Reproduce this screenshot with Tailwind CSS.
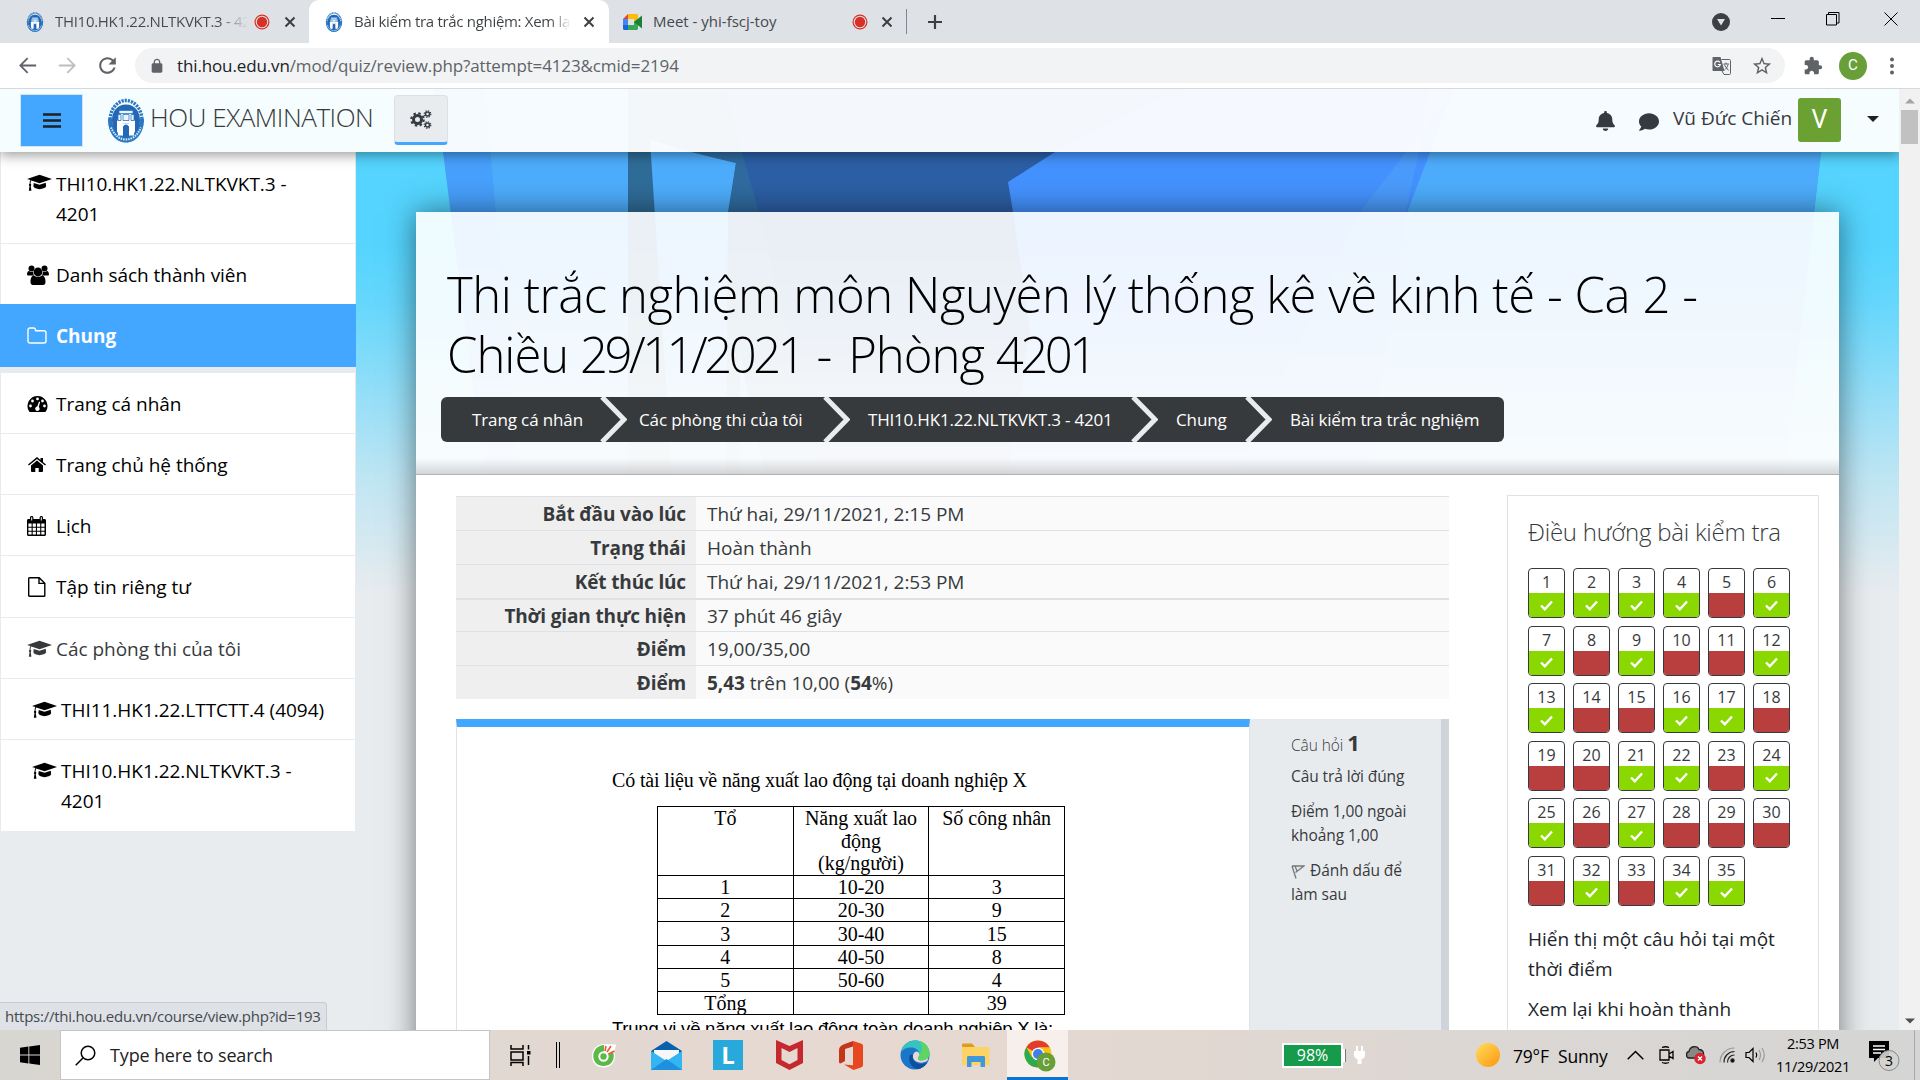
<!DOCTYPE html>
<html lang="vi">
<head>
<meta charset="utf-8">
<title>Bài kiểm tra trắc nghiệm: Xem lại</title>
<script src="https://cdn.jsdelivr.net/npm/@tailwindcss/browser@4"></script>
</head>
<body class="overflow-hidden bg-white font-['Open_Sans','Noto_Sans',sans-serif] text-[#373a3c]">
<svg class="hidden">
  <symbol id="logo" viewBox="0 0 36 44">
    <ellipse cx="18" cy="23" rx="13" ry="17" fill="#fff"/>
    <ellipse cx="18" cy="22" rx="16" ry="20" fill="none" stroke="#2a78c4" stroke-width="3.4" stroke-dasharray="2.2 1"/>
    <path d="M0 20h4c0 9 5 17 14 17s14-8 14-17h4c0 14-7 24-18 24S0 34 0 20z" fill="#2a78c4"/>
    <path d="M4 22C4 13 9 6 18 6s14 7 14 16c0 5-2 10-5 13V22h-3V13H12v9H9v13c-3-3-5-8-5-13z" fill="#2468b4"/>
    <path d="M11 12h14v3H11zM10 16h3v6h-3zM15 16h6v6h-6zM23 16h3v6h-3z" fill="#e9f4fc" stroke="#2a78c4" stroke-width=".8"/>
    <path d="M9 22.500h18v2.500H9zM10 25h5v12h-5zM21 25h5v12h-5z" fill="#fff"/>
    <path d="M15 25h6v14h-6z" fill="#2468b4"/><path d="M15 28q3-4 6 0v-3h-6z" fill="#fff"/>
    <path d="M3 29c3 7 8 12 15 12s12-5 15-12" fill="none" stroke="#d9eaf8" stroke-width="2" stroke-dasharray="1.500 1"/>
  </symbol>
  <symbol id="cap" viewBox="0 0 26 17"><path d="M13 0l13 4.300-13 4.400L4.500 5.900C3.800 7 3.700 8 3.700 9.200c1 .6 1 1.800.2 2.400l.7 5H1.900l.7-5c-.9-.6-.8-1.800.1-2.400 0-1.400.2-2.600.8-3.700L0 4.300zM7 8.400l6 2 6.500-2.100.4 3.700c-.8 1.900-3.700 2.900-6.900 2.900s-5.700-1-6.400-2.900z"/></symbol>
  <symbol id="users" viewBox="0 0 22 20"><circle cx="4.500" cy="3.500" r="3"/><circle cx="17.500" cy="3.500" r="3"/><path d="M0 10c0-3 1-4.200 2-4 2 1.200 3 1 4.200.5C6 8.500 6.500 9.500 7.300 10.500H2C.8 10.500 0 10.300 0 10zM22 10c0-3-1-4.200-2-4-2 1.200-3 1-4.200.5.2 2-.3 3-1.100 4H20c1.200 0 2-.2 2-.5z"/><circle cx="11" cy="7" r="4.400"/><path d="M3.500 17c0-4 1.300-6.500 3.500-6.500 2 1.700 6 1.700 8 0 2.200 0 3.500 2.500 3.500 6.500 0 2-1 3-2.500 3H6c-1.500 0-2.500-1-2.500-3z"/></symbol>
  <symbol id="folder" viewBox="0 0 20 17"><path d="M1 3a2 2 0 0 1 2-2h3.500a2 2 0 0 1 2 2v.8H17a2 2 0 0 1 2 2V14a2 2 0 0 1-2 2H3a2 2 0 0 1-2-2z" fill="none" stroke="currentColor" stroke-width="1.400"/></symbol>
  <symbol id="dash" viewBox="0 0 20 16"><path fill-rule="evenodd" d="M10 0a10 10 0 0 1 8.500 15.200c-.3.500-.6.800-1 .8h-15c-.4 0-.7-.3-1-.8A10 10 0 0 1 10 0zM3 8.600a1.400 1.400 0 1 0 0 2.800 1.400 1.400 0 0 0 0-2.800zm2-5a1.400 1.400 0 1 0 0 2.800 1.400 1.400 0 0 0 0-2.800zm5-2.100a1.400 1.400 0 1 0 0 2.800 1.400 1.400 0 0 0 0-2.800zm5 2.100a1.400 1.400 0 1 0 0 2.800 1.400 1.400 0 0 0 0-2.800zm2 5a1.400 1.400 0 1 0 0 2.800 1.400 1.400 0 0 0 0-2.800zm-5.500-3l-1.700 5a2.200 2.200 0 1 0 1.500.5l1.300-5z"/></symbol>
  <symbol id="home" viewBox="0 0 18 15"><path d="M9 3.500l6 5V14c0 .6-.3 1-.8 1h-3.500v-4H7.300v4H3.800c-.5 0-.8-.4-.8-1V8.500zM9 0l3.500 2.900V1H15v4l3 2.500-.9 1.100L9 2 .9 8.600 0 7.500z"/></symbol>
  <symbol id="cal" viewBox="0 0 19 20"><path d="M0 4.500C0 3.500.7 3 1.500 3H3V1.500C3 .6 3.700 0 4.700 0s1.700.6 1.700 1.500V3h6.200V1.500c0-.9.700-1.500 1.700-1.500S16 .6 16 1.500V3h1.500c.8 0 1.500.5 1.500 1.500v14c0 .9-.7 1.500-1.500 1.500h-16C.7 20 0 19.400 0 18.500z"/><path d="M1.400 7.500h3.200v3.200H1.400zm4.300 0h3.200v3.200H5.700zm4.300 0h3.200v3.200H10zm4.300 0h3.200v3.200h-3.200zM1.400 11.700h3.200v3H1.400zm4.300 0h3.200v3H5.700zm4.300 0h3.200v3H10zm4.300 0h3.200v3h-3.200zM1.400 15.700h3.200v2.900H1.400zm4.300 0h3.200v2.900H5.700zm4.300 0h3.200v2.900H10zm4.300 0h3.200v2.900h-3.200zM4.200 1.200h1v3.200h-1zM13.800 1.200h1v3.200h-1z" fill="#fff"/></symbol>
  <symbol id="file" viewBox="0 0 18 20"><path d="M1.500.8h9.700l5.600 5.400v12.200c0 .5-.3.800-.8.800H1.500c-.5 0-.8-.3-.8-.8V1.600c0-.5.300-.8.800-.8zM11 .8v5.600h5.800" fill="none" stroke="currentColor" stroke-width="1.400"/></symbol>
  <symbol id="rec" viewBox="0 0 16 16"><circle cx="8" cy="8" r="6.900" fill="none" stroke="#d93025" stroke-width="1.200"/><circle cx="8" cy="8" r="5.200" fill="#d93025"/></symbol>
  <symbol id="x" viewBox="0 0 12 12"><path d="M1.500 1.500l9 9M10.500 1.500l-9 9" stroke="#3c4043" stroke-width="2"/></symbol>
</svg>

<div class="flex h-[1080px] w-[1920px] flex-col overflow-hidden">
  <!-- tab strip -->
  <div class="flex h-[43px] shrink-0 bg-[#dee1e6] text-[15px] leading-[22px] tracking-[-0.3px]">
    <div class="flex w-[309px] items-center pl-[26px]">
      <svg class="h-5 w-[18px] shrink-0"><use href="#logo"/></svg>
      <span class="mb-[2px] ml-[11px] w-[193px] overflow-hidden bg-gradient-to-r from-[#45494d] from-85% to-transparent bg-clip-text whitespace-nowrap text-transparent">THI10.HK1.22.NLTKVKT.3 - 4201</span>
      <svg class="ml-[6px] h-4 w-4 shrink-0"><use href="#rec"/></svg>
      <svg class="ml-[14px] size-3 shrink-0"><use href="#x"/></svg>
    </div>
    <div class="w-[300px] bg-[#dee1e6]">
      <div class="flex h-[43px] items-center rounded-t-[10px] bg-white pl-[16px]">
        <svg class="h-5 w-[18px] shrink-0"><use href="#logo"/></svg>
        <span class="mb-[2px] ml-[11px] w-[217px] overflow-hidden bg-gradient-to-r from-[#3c4043] from-90% to-transparent bg-clip-text whitespace-nowrap text-transparent">Bài kiểm tra trắc nghiệm: Xem lại</span>
        <svg class="ml-[12px] size-3 shrink-0"><use href="#x"/></svg>
      </div>
    </div>
    <div class="flex items-center pl-[14px]">
      <svg class="h-4 w-5" viewBox="0 0 20 16"><path d="M0 5l5-5v5z" fill="#ea4335"/><path d="M5 0h8.500c1 0 1.500.6 1.500 1.500V7l-4 3V5H5z" fill="#fbbc04"/><path d="M0 5h5v6H0z" fill="#4285f4"/><path d="M0 11h5v5H1.500C.6 16 0 15.400 0 14.500z" fill="#1967d2"/><path d="M5 11h6V8l4-3v9.500c0 .9-.6 1.500-1.500 1.500H5z" fill="#34a853"/><path d="M11 8l8-6.500v13z" fill="#188038"/></svg>
      <span class="mb-[2px] ml-[10px] w-[200px] tracking-normal text-[#45494d]">Meet - yhi-fscj-toy</span>
      <svg class="-ml-[1px] size-4"><use href="#rec"/></svg>
      <svg class="ml-[13px] size-3"><use href="#x"/></svg>
      <div class="ml-[13px] h-[25px] w-px bg-[#80868b]"></div>
      <svg class="ml-[20px] size-4" viewBox="0 0 16 16"><path d="M8 1v14M1 8h14" stroke="#3c4043" stroke-width="2.200"/></svg>
    </div>
    <div class="ml-auto flex pr-[22px]">
      <svg class="mt-[13px] size-[18px]" viewBox="0 0 18 18"><circle cx="9" cy="9" r="9" fill="#3c4043"/><path d="M5 6h8l-4 6.500z" fill="#dee1e6"/></svg>
      <svg class="mt-3 ml-[41px] size-[14px]" viewBox="0 0 14 14"><path d="M0 6.500h14" stroke="#000"/></svg>
      <svg class="mt-3 ml-[41px] size-[14px]" viewBox="0 0 14 14"><path d="M.5 2.500h10v10.500H.5zM2.500 2.500v-2h10.500v10.500h-2.500" fill="none" stroke="#000"/></svg>
      <svg class="mt-3 ml-[44px] size-[14px]" viewBox="0 0 14 14"><path d="M.5.5l13 13M13.500.5l-13 13" stroke="#000"/></svg>
    </div>
  </div>

  <!-- address bar -->
  <div class="flex h-[46px] shrink-0 items-center border-b border-[#d5d8dc] bg-white pl-[16px] text-[#5f6368]">
    <svg class="size-[23px] fill-current" viewBox="0 0 24 24"><path d="M21 11H6.800l6-6L11.500 3.700 3.200 12l8.300 8.300 1.300-1.300-6-6H21z"/></svg>
    <svg class="ml-[17px] size-[23px] fill-[#bcbec1]" viewBox="0 0 24 24"><path d="M3 11h14.200l-6-6 1.300-1.300 8.300 8.300-8.300 8.300-1.300-1.300 6-6H3z"/></svg>
    <svg class="ml-[16px] size-[25px] fill-current" viewBox="0 0 24 24"><path d="M17.650 6.350C16.200 4.900 14.210 4 12 4c-4.420 0-7.990 3.580-7.990 8s3.570 8 7.990 8c3.730 0 6.840-2.550 7.730-6h-2.080c-.82 2.330-3.040 4-5.650 4-3.310 0-6-2.690-6-6s2.690-6 6-6c1.660 0 3.140.69 4.220 1.780L13 11h7V4l-2.350 2.350z"/></svg>
    <div class="ml-[15px] flex h-[35px] w-[1650px] items-center rounded-full bg-[#f1f3f4] pl-[14px] text-[17px]">
      <svg class="size-4 fill-current" viewBox="0 0 24 24"><path d="M18 8h-1V6c0-2.760-2.240-5-5-5S7 3.240 7 6v2H6c-1.100 0-2 .9-2 2v10c0 1.100.9 2 2 2h12c1.100 0 2-.9 2-2V10c0-1.100-.9-2-2-2zm-2.900 0H8.900V6c0-1.710 1.390-3.100 3.100-3.100 1.710 0 3.100 1.390 3.100 3.100v2z"/></svg>
      <span class="ml-[12px] tracking-[-0.130px]"><span class="text-[#202124]">thi.hou.edu.vn</span>/mod/quiz/review.php?attempt=4123&amp;cmid=2194</span>
      <svg class="ml-auto size-[19px]" viewBox="0 0 19 19"><path d="M1.500 1h7l4 14h-11C.7 15 .5 14.500.5 14V2c0-.6.400-1 1-1z" fill="#5f6368"/><path d="M9.500 3.500h8c.6 0 1 .4 1 1v13c0 .6-.4 1-1 1H12l-2-3.500" fill="none" stroke="#5f6368"/><path d="M7.800 6.300A2.800 2.800 0 1 0 8.300 8.500H5.800" fill="none" stroke="#fff" stroke-width="1.200"/><path d="M11.500 8h5.500M14 6.500V8M12 8.500l4.500 6M16 8.500c-.5 2.500-2 4.500-3.500 5.500" stroke="#5f6368" fill="none"/></svg>
      <svg class="mr-[12px] ml-[20px] size-[22px] fill-current" viewBox="0 0 24 24"><path d="M22 9.240l-7.190-.62L12 2 9.190 8.630 2 9.240l5.460 4.730L5.820 21 12 17.270 18.180 21l-1.630-7.030L22 9.240zM12 15.400l-3.760 2.270 1-4.280-3.320-2.880 4.380-.38L12 6.100l1.710 4.040 4.380.38-3.320 2.880 1 4.280L12 15.400z"/></svg>
    </div>
    <svg class="ml-[18px] size-5 fill-current" viewBox="0 0 24 24"><path d="M20.500 11H19V7c0-1.100-.9-2-2-2h-4V3.500C13 2.120 11.880 1 10.500 1S8 2.120 8 3.500V5H4c-1.100 0-1.990.9-1.990 2v3.800H3.500c1.490 0 2.700 1.210 2.700 2.700s-1.210 2.700-2.700 2.700H2V20c0 1.100.9 2 2 2h3.800v-1.500c0-1.490 1.210-2.700 2.700-2.700 1.490 0 2.700 1.210 2.700 2.700V22H17c1.100 0 2-.9 2-2v-4h1.500c1.380 0 2.500-1.120 2.500-2.500S21.880 11 20.500 11z"/></svg>
    <div class="ml-4 grid size-7 place-items-center rounded-full bg-[#689f38] font-[Roboto] text-[15px] text-white">C</div>
    <svg class="ml-[23px] h-[18px] w-1 fill-current" viewBox="0 0 4 18"><circle cx="2" cy="2.500" r="2"/><circle cx="2" cy="9" r="2"/><circle cx="2" cy="15.500" r="2"/></svg>
  </div>

  <div class="flex h-[941px] shrink-0">
    <!-- web page -->
    <div class="relative isolate h-[941px] w-[1899px] overflow-hidden bg-[#e8ecef]">
      <svg class="absolute inset-0 -z-10 h-[941px] w-[1899px]" viewBox="0 89 1899 941">
        <defs><linearGradient id="fade" x1="0" y1="89" x2="0" y2="600" gradientUnits="userSpaceOnUse"><stop offset=".3" stop-color="#e8ecef" stop-opacity="0"/><stop offset=".42" stop-color="#e8ecef" stop-opacity=".12"/><stop offset=".76" stop-color="#e8ecef" stop-opacity=".72"/><stop offset=".99" stop-color="#e8ecef"/></linearGradient></defs>
        <path fill="#54d4fe" d="M0 89h1899v941H0z"/>
        <path fill="#47a0fc" d="M433 89L443 152 500 600H1770L1821 152 1830 89z"/>
        <path fill="#4dadfc" d="M485 89L530 600H1768L1821 152 1828 89z"/>
        <path fill="#2f6c98" d="M628 89V600H740V89z"/>
        <path fill="#4dadfc" d="M650 140L680 600H725L728 212 736 163 691 152z"/>
        <path fill="#2f6ba0" d="M700 89V154L736 163 729 212V300L790 600H1050V89z"/>
        <path fill="#2c5fa5" d="M725 89L742 152 759 212 850 600H1050L1200 89z"/>
        <path fill="#4492ff" d="M1180 89L1055 152 1008 182 1013 212 1030 330 990 600H1260L1454 89z"/>
        <path fill="#4a9bfb" d="M1454 89L1406 152 1360 212 1180 600H1350L1406 212 1419 152 1428 89z"/>
        <path fill="url(#fade)" d="M0 89h1899v511H0z"/><path fill="#e8ecef" d="M0 598h1899v440H0z"/>
      </svg>

      <header class="relative z-10 flex h-[63px] items-center bg-white/95 pl-[20px] shadow-[0_3px_12px_rgba(0,0,0,0.4)]">
        <div class="grid h-[53px] w-[63px] place-items-center border border-[#d5e6f2] bg-[#43a6ff]">
          <svg class="h-[15px] w-[18px]" viewBox="0 0 18 15"><path d="M0 1.500h18M0 7.500h18M0 13.500h18" stroke="#1d2125" stroke-width="2.500"/></svg>
        </div>
        <svg class="ml-[25px] h-[45px] w-9"><use href="#logo"/></svg>
        <span class="-mt-[6px] ml-[6px] w-[224px] text-[26px] font-light tracking-[-0.450px] whitespace-nowrap">HOU EXAMINATION</span>
        <div class="-mt-px ml-[20px] grid h-[50px] w-[54px] place-items-center rounded border border-b-3 border-[#dcdfe3] border-b-[#43a6ff] bg-[#e9ecef]">
          <svg class="h-[19px] w-[22px]" viewBox="0 0 22 19" fill="none" stroke="#343a40"><circle cx="7.500" cy="9.500" r="4" stroke-width="3"/><circle cx="7.500" cy="9.500" r="6.300" stroke-width="2" stroke-dasharray="2.500 2.450"/><circle cx="17.500" cy="4" r="2" stroke-width="1.500"/><circle cx="17.500" cy="4" r="3.300" stroke-width="1.200" stroke-dasharray="1.300 1.300"/><circle cx="17.500" cy="15" r="2" stroke-width="1.500"/><circle cx="17.500" cy="15" r="3.300" stroke-width="1.200" stroke-dasharray="1.300 1.300"/></svg>
        </div>
        <div class="-mt-px ml-auto flex items-center pr-[20px]">
          <svg class="mt-px h-5 w-[19px] fill-[#343a40]" viewBox="0 0 448 512" preserveAspectRatio="none"><path d="M224 512c35.320 0 63.970-28.650 63.970-64H160.030c0 35.350 28.650 64 63.970 64zm215.390-149.710c-19.320-20.760-55.470-51.990-55.470-154.290 0-77.700-54.480-139.900-127.940-155.160V32c0-17.670-14.320-32-31.980-32s-31.980 14.330-31.980 32v20.840C118.560 68.100 64.080 130.300 64.080 208c0 102.300-36.150 133.530-55.470 154.290-6 6.450-8.660 14.160-8.610 21.710.11 16.400 12.980 32 32.100 32h383.800c19.120 0 32-15.600 32.100-32 .05-7.550-2.610-15.270-8.610-21.710z"/></svg>
          <svg class="mt-1 ml-[24px] h-5 w-5 fill-[#343a40]" viewBox="0 0 512 512"><path d="M256 32C114.600 32 0 125.100 0 240c0 49.600 21.400 95 57 130.700C44.500 421.100 2.700 466 2.200 466.500c-2.200 2.300-2.800 5.700-1.500 8.700S4.800 480 8 480c66.300 0 116-31.800 140.600-51.400 32.700 12.300 69 19.400 107.400 19.400 141.400 0 256-93.100 256-208S397.400 32 256 32z"/></svg>
          <span class="-mt-[3px] ml-[14px] w-[120px] text-[19px] whitespace-nowrap">Vũ Đức Chiến</span>
          <div class="ml-[5px] grid h-11 w-[43px] place-items-center rounded-[3px] bg-[#6ba032] font-[Roboto] text-[25px] text-white">V</div>
          <svg class="-mt-[3px] ml-[26px] h-[6px] w-3" viewBox="0 0 12 6"><path d="M0 0h12L6 6z" fill="#1d2125"/></svg>
        </div>
      </header>

      <div class="flex h-[878px]">
        <!-- side navigation -->
        <nav class="flex w-[356px] shrink-0 flex-col self-start text-[19px] leading-[30px] tracking-[-0.030px] text-black">
          <a class="flex h-[92px] border-x border-b border-[#e8ebee] bg-white pt-[17px] pl-[26px]"><svg class="mt-[5px] h-[18px] w-[25px]"><use href="#cap"/></svg><span class="ml-[4px]">THI10.HK1.22.NLTKVKT.3 -<br>4201</span></a>
          <a class="flex h-[60px] items-center border-x border-[#e8ebee] bg-white pt-px pl-[26px]"><svg class="h-5 w-[22px]"><use href="#users"/></svg><span class="ml-[7px]">Danh sách thành viên</span></a>
          <a class="flex h-[63px] items-center bg-[#43a6ff] pl-[27px] font-bold text-white"><svg class="h-[17px] w-5"><use href="#folder"/></svg><span class="ml-[9px]">Chung</span></a>
          <a class="flex h-[67px] items-center border-x border-t-6 border-b border-[#e8ebee] bg-white pt-px pl-[26px]"><svg class="h-4 w-[21px]"><use href="#dash"/></svg><span class="ml-[8px]">Trang cá nhân</span></a>
          <a class="flex h-[61px] items-center border-x border-b border-[#e8ebee] bg-white pt-px pl-[27px]"><svg class="h-[15px] w-[18px]"><use href="#home"/></svg><span class="ml-[10px]">Trang chủ hệ thống</span></a>
          <a class="flex h-[61px] items-center border-x border-b border-[#e8ebee] bg-white pt-px pl-[26px]"><svg class="h-5 w-[19px]"><use href="#cal"/></svg><span class="ml-[10px]">Lịch</span></a>
          <a class="flex h-[62px] items-center border-x border-b border-[#e8ebee] bg-white pt-px pl-[27px]"><svg class="h-5 w-[18px]"><use href="#file"/></svg><span class="ml-[10px]">Tập tin riêng tư</span></a>
          <a class="flex h-[61px] items-center border-x border-b border-[#e8ebee] bg-white pt-px pl-[26px] text-[#373a3c]"><svg class="h-[18px] w-[25px] fill-[#373a3c]"><use href="#cap"/></svg><span class="ml-[4px]">Các phòng thi của tôi</span></a>
          <a class="flex h-[61px] items-center border-x border-b border-[#e8ebee] bg-white pt-px pl-[31px]"><svg class="h-[18px] w-[25px]"><use href="#cap"/></svg><span class="ml-[4px]">THI11.HK1.22.LTTCTT.4 (4094)</span></a>
          <a class="flex h-[91px] border-x border-[#e8ebee] bg-white pt-[16px] pl-[31px]"><svg class="mt-[6px] h-[18px] w-[25px]"><use href="#cap"/></svg><span class="ml-[4px]">THI10.HK1.22.NLTKVKT.3 -<br>4201</span></a>
        </nav>

        <!-- content card -->
        <main class="mt-[60px] ml-[60px] flex h-[900px] w-[1423px] shrink-0 flex-col shadow-[0_0_28px_rgba(0,0,0,0.5)]">
          <div class="h-[263px] shrink-0 border-b border-[#aeb2b6] bg-white/90 bg-gradient-to-t from-black/15 to-transparent to-[16px] pt-[52px]">
            <h1 class="pl-[31px] text-[49px] leading-[60px] font-light tracking-[-0.440px] whitespace-nowrap text-black">Thi trắc nghiệm môn Nguyên lý thống kê về kinh tế - Ca 2 -<br><span class="tracking-[-1px]">Chiều </span><span class="tracking-[-3.500px]">29/11/2021</span><span class="tracking-[1.600px]"> - </span><span class="tracking-[-1px]">Phòng </span><span class="tracking-[-3.400px]">4201</span></h1>
            <ol class="mt-[13px] ml-[25px] flex h-[45px] w-[1063px] items-center rounded-[6px] bg-[#373a3c] pl-[31px] text-[17px] tracking-[-0.120px] whitespace-nowrap text-white">
              <li class="w-[128px] pt-px">Trang cá nhân</li>
              <li class="flex w-[229px] items-center"><svg class="mr-[12px] h-[45px] w-[27px] shrink-0" viewBox="0 0 27 45"><path d="M2 0L24 22.500 2 45" fill="none" stroke="#e9ecef" stroke-width="5"/></svg><span class="pt-px">Các phòng thi của tôi</span></li>
              <li class="-ml-[6px] flex w-[308px] items-center"><svg class="mr-[18px] h-[45px] w-[27px] shrink-0" viewBox="0 0 27 45"><path d="M2 0L24 22.500 2 45" fill="none" stroke="#e9ecef" stroke-width="5"/></svg><span class="pt-px tracking-[-0.200px]">THI10.HK1.22.NLTKVKT.3 - 4201</span></li>
              <li class="flex w-[114px] items-center"><svg class="mr-[17px] h-[45px] w-[27px] shrink-0" viewBox="0 0 27 45"><path d="M2 0L24 22.500 2 45" fill="none" stroke="#e9ecef" stroke-width="5"/></svg><span class="pt-px pl-px">Chung</span></li>
              <li class="flex items-center"><svg class="mr-[18px] h-[45px] w-[27px] shrink-0" viewBox="0 0 27 45"><path d="M2 0L24 22.500 2 45" fill="none" stroke="#e9ecef" stroke-width="5"/></svg><span class="pt-px tracking-[-0.180px]">Bài kiểm tra trắc nghiệm</span></li>
            </ol>
          </div>
          <div class="flex flex-1 bg-white pt-[21px] pl-[40px]">
            <div class="w-[993px] shrink-0">
              <dl class="grid grid-cols-[240px_1fr] grid-rows-[34px_34px_34px_33px_34px_34px] text-[19px] leading-[34px] tracking-[-0.030px]">
                <dt class="border-t border-[#dee2e6] bg-[#efefef] pr-[10px] text-right font-bold tracking-[-0.150px]">Bắt đầu vào lúc</dt><dd class="border-t border-[#dee2e6] bg-[#fafafa] pl-[11px]">Thứ hai, 29/11/2021, 2:15 PM</dd>
                <dt class="border-t border-[#dee2e6] bg-[#efefef] pr-[10px] text-right font-bold tracking-[-0.150px]">Trạng thái</dt><dd class="border-t border-[#dee2e6] bg-[#fafafa] pl-[11px]">Hoàn thành</dd>
                <dt class="border-t border-[#dee2e6] bg-[#efefef] pr-[10px] text-right font-bold tracking-[-0.150px]">Kết thúc lúc</dt><dd class="border-t border-[#dee2e6] bg-[#fafafa] pl-[11px]">Thứ hai, 29/11/2021, 2:53 PM</dd>
                <dt class="border-t-2 border-[#dee2e6] bg-[#efefef] pr-[10px] text-right leading-[32px] font-bold tracking-[-0.150px]">Thời gian thực hiện</dt><dd class="border-t-2 border-[#dee2e6] bg-[#fafafa] pl-[11px] leading-[32px]">37 phút 46 giây</dd>
                <dt class="border-t border-[#dee2e6] bg-[#efefef] pr-[10px] text-right font-bold tracking-[-0.150px]">Điểm</dt><dd class="border-t border-[#dee2e6] bg-[#fafafa] pl-[11px]">19,00/35,00</dd>
                <dt class="border-t border-[#dee2e6] bg-[#efefef] pr-[10px] text-right font-bold tracking-[-0.150px]">Điểm</dt><dd class="border-t border-[#dee2e6] bg-[#fafafa] pl-[11px]"><b>5,43</b> trên 10,00 (<b>54</b>%)</dd>
              </dl>
              <div class="mt-[20px] flex h-[400px]">
                <div class="w-[794px] border-x border-t-8 border-[#dee2e6] border-t-[#43a6ff] pt-[40px] pl-[155px] font-['Liberation_Serif',serif] text-[20px] leading-[23px] text-black">
                  <p class="h-[39px] leading-[27px] tracking-[-0.150px] whitespace-nowrap">Có tài liệu về năng xuất lao động tại doanh nghiệp X</p>
                  <table class="ml-[45px] w-[408px] table-fixed border-collapse text-center leading-[23px]">
                    <tr class="h-[69px] align-top"><td class="border border-black p-0">Tổ</td><td class="border border-black p-0 leading-[22.500px]">Năng xuất lao<br>động<br>(kg/người)</td><td class="border border-black p-0">Số công nhân</td></tr>
                    <tr class="h-[23px] leading-[22px]"><td class="border border-black p-0">1</td><td class="border border-black p-0">10-20</td><td class="border border-black p-0">3</td></tr>
                    <tr class="h-[23px] leading-[22px]"><td class="border border-black p-0">2</td><td class="border border-black p-0">20-30</td><td class="border border-black p-0">9</td></tr>
                    <tr class="h-[24px] leading-[22px]"><td class="border border-black p-0">3</td><td class="border border-black p-0">30-40</td><td class="border border-black p-0">15</td></tr>
                    <tr class="h-[23px] leading-[22px]"><td class="border border-black p-0">4</td><td class="border border-black p-0">40-50</td><td class="border border-black p-0">8</td></tr>
                    <tr class="h-[23px] leading-[22px]"><td class="border border-black p-0">5</td><td class="border border-black p-0">50-60</td><td class="border border-black p-0">4</td></tr>
                    <tr class="h-[23px] leading-[22px]"><td class="border border-black p-0">Tổng</td><td class="border border-black p-0"></td><td class="border border-black p-0">39</td></tr>
                  </table>
                  <p class="mt-[2px] font-['Liberation_Sans',sans-serif] text-[18.500px] tracking-[-0.240px] whitespace-nowrap">Trung vị về năng xuất lao động toàn doanh nghiệp X là:</p>
                </div>
                <div class="w-[199px] border-r-8 border-[#cfd4db] bg-[#e8ebee] pt-[8px] pl-[41px] text-[15.500px] leading-[24px] tracking-[-0.080px]">
                  <p class="leading-[30px] font-light">Câu hỏi <b class="text-[22px] font-bold">1</b></p>
                  <p class="mt-[4px]">Câu trả lời đúng</p>
                  <p class="mt-[11px]">Điểm 1,00 ngoài<br>khoảng 1,00</p>
                  <p class="mt-[11px] whitespace-nowrap"><svg class="mr-[5px] inline h-[14px] w-[14px]" viewBox="0 0 14 14" fill="none" stroke="#777" stroke-width="1.300"><path d="M1 1l4 12.500M1 1h12L4.500 7.500M4 1l2 5"/></svg>Đánh dấu để<br>làm sau</p>
                </div>
              </div>
            </div>
            <aside class="-mt-px ml-[58px] w-[312px] border border-[#dee2e6] pt-[18px] pl-[20px]">
              <h2 class="text-[24px] leading-9 font-light tracking-[-0.230px]">Điều hướng bài kiểm tra</h2>
              <div id="quiz" class="mt-[18px] grid grid-cols-[repeat(6,37px)] gap-x-[8px] gap-y-[7.600px]"></div>
              <p class="mt-[18px] text-[19px] leading-[30px] whitespace-nowrap text-[#212529]">Hiển thị một câu hỏi tại một<br>thời điểm</p>
              <p class="mt-[10px] text-[19px] leading-[30px] text-[#212529]">Xem lại khi hoàn thành</p>
            </aside>
          </div>
        </main>
      </div>

      <!-- link status bubble -->
      <div class="absolute bottom-0 left-0 z-20 h-7 w-[327px] rounded-tr-[4px] border-t border-r border-[#c8cbd0] bg-[#dee1e6] pl-[5px] text-[15px] leading-[26px] tracking-[-0.250px] text-[#45494d]">https://thi.hou.edu.vn/course/view.php?id=193</div>
    </div>

    <!-- scrollbar -->
    <div class="flex w-[21px] flex-col items-center bg-[#f1f1f1] pt-[9px] pb-[6px]">
      <svg class="h-[6px] w-[10px]" viewBox="0 0 10 6"><path d="M0 5.500h10L5 .5z" fill="#a3a3a3"/></svg>
      <div class="mt-[6px] h-[34px] w-[17px] bg-[#c1c1c1]"></div>
      <svg class="mt-auto h-[6px] w-[10px]" viewBox="0 0 10 6"><path d="M0 .5h10L5 5.500z" fill="#505050"/></svg>
    </div>
  </div>

  <!-- taskbar -->
  <div class="flex h-[50px] shrink-0 items-center bg-linear-to-r from-[#d8d6d1] via-[#e7d9d1] via-45% to-[#d4d5d4] text-black">
    <svg class="ml-[20px] size-5" viewBox="0 0 20 20"><path d="M0 2.800l8.400-1.200v7.900H0zM9.300 1.500L20 0v9.500H9.300zM0 10.500h8.400v8L0 17.300zM9.300 10.500H20V20L9.300 18.600z"/></svg>
    <div class="ml-[20px] flex h-[50px] w-[430px] items-center border border-[#c6c5c3] bg-white pl-[14px]">
      <svg class="size-[21px]" viewBox="0 0 21 21" fill="none" stroke="#000" stroke-width="1.500"><circle cx="13" cy="8" r="6.800"/><path d="M8 13L.7 20.300"/></svg>
      <span class="ml-[14px] text-[18px] tracking-[-0.150px] text-[#222]">Type here to search</span>
    </div>
    <svg class="ml-[20px] size-[21px]" viewBox="0 0 21 21" fill="none" stroke="#000" stroke-width="1.500"><path d="M1 0v4h12V0M1 7h12v8H1zM1 21v-3.500h12V21M18.500 0v4.500M18.500 11v9"/><path d="M17 6h3.500v3.500H17z" fill="#000" stroke="none"/></svg>
    <div class="ml-[25px] h-[26px] w-[4px] border-x border-black"></div>
    <svg class="ml-[31px] h-[26px] w-[26px]" viewBox="0 0 26 26"><path d="M13 2C6 2 1 7 1 14s5 11.500 11.500 11.500S24 21 24 14c0-2-.3-3-.8-4l2-7.500z" fill="#fff"/><path d="M13 3C7 3 2.300 8 2.300 14s4.200 10 10.200 10 10.300-4 10.300-10c0-1.300-.2-2.500-.6-3.500L17 12l-4-2z" fill="#5cb947"/><circle cx="12.500" cy="14.500" r="4.200" fill="#5cb947" stroke="#fff" stroke-width="2"/><path d="M14 9l1-5M16 10l4-6M17.500 12l6-3" stroke="#f0563d" stroke-width="1.600"/></svg>
    <svg class="ml-[34px] h-[29px] w-[31px]" viewBox="0 0 31 29"><path d="M0 10L15.500 0 31 10v19H0z" fill="#0a5fae"/><path d="M3 9h25v10H3z" fill="#f5f7f8"/><path d="M0 10l15.500 10L31 10v19H0z" fill="#33b5f2"/><path d="M0 29l15.500-11L31 29z" fill="#1e90e0"/></svg>
    <div class="ml-[31px] grid h-[30px] w-[30px] place-items-center bg-[#27a9dc] text-[24px] leading-none font-bold text-white">L</div>
    <svg class="ml-[33px] h-[30px] w-[27px]" viewBox="0 0 27 30"><path d="M0 0l13.500 6L27 0v23l-13.500 7L0 23zM5.500 8v12l8 4.200 8-4.200V8l-8 4z" fill="#c5282f" fill-rule="evenodd"/></svg>
    <svg class="ml-[36px] h-[29px] w-[24px]" viewBox="0 0 24 29"><path d="M14 0L5 3.300C2 4.500 0 6 0 9v11.500C0 22.500 1 23 2.500 22L6 20V8l8-2.500z" fill="#c4351a"/><path d="M14 0l8 2.500c1.500.5 2 1.500 2 2.500v19c0 1.300-.7 2-2 2.500L14.500 29 5 23.500l9 .8z" fill="#e8481f"/></svg>
    <svg class="ml-[37px] size-[30px]" viewBox="0 0 30 30"><circle cx="15" cy="15" r="14.500" fill="#1a76c8"/><path d="M1 12C3 4 9 .5 15.500.5 24 .5 29.500 6.500 29.500 13c0 5-3.500 7.500-7 7.500-3 0-4.500-1-4.500-2.500 0-1 1.300-1.500 1.300-4C19 10 15.500 7.500 11 7.500 6 7.500 3 9.500 1 12z" fill="#35c4c0"/><path d="M19 1c6 1.500 10.500 6.500 10.500 12 0 5-3.500 7.500-7 7.500-3 0-4.500-1-4.500-2.500 0-1 1.300-1.500 1.300-4 3-2 4-8-.3-13z" fill="#5fd463"/><path d="M10 15c-3 6 2 14 9 14 4-1.500 7-4 8.500-6.500C20 26 11 23 13 14.500z" fill="#0c4fa0"/><path d="M14.500 12.500c-2 2-2.500 6 1 8.500 4 2.500 8.500 2 12-.5l1-3c-3 4-11 4-10.500.5 0-1 1.300-1.500 1.300-4-.5-2-2.500-3.500-4.800-1.500z" fill="#e6dad2"/></svg>
    <svg class="ml-[32px] h-6 w-[28px]" viewBox="0 0 28 24"><path d="M0 2c0-1 .5-1.500 1.500-1.500H10L13 4H0z" fill="#e09b1a"/><path d="M0 4h26c1 0 1.500.5 1.500 1.500V22H0z" fill="#fdd366"/><path d="M5 24V14.500C5 13.500 5.500 13 6.500 13h15c1 0 1.500.5 1.500 1.500V24h-4.500v-5h-9v5z" fill="#4097d9"/></svg>
    <div class="ml-[17px] flex h-[50px] w-[61px] border-b-3 border-[#0b74d1] bg-[#f6efeb] pt-[10px] pl-[17px]">
      <svg class="size-[32px]" viewBox="0 0 32 32"><circle cx="14" cy="14" r="13.500" fill="#fbc116"/><path d="M14 14L2.300 7.200A13.500 13.500 0 0 1 25.700 7.200H14z" fill="#e33b2e"/><path d="M2.300 7.200A13.500 13.500 0 0 0 14 27.500l6-10.200H8z" fill="#2da94f"/><circle cx="14" cy="14" r="6.300" fill="#fff"/><circle cx="14" cy="14" r="5" fill="#3f7fe8"/><circle cx="22" cy="22" r="9.500" fill="#689f38"/><text x="22" y="26" fill="#fff" font-family="Roboto" font-size="11" text-anchor="middle">C</text></svg>
    </div>
    <div class="ml-auto flex items-center pr-[5px] text-[17px]">
      <div class="grid h-[25px] w-[61px] place-items-center border-2 border-white bg-[#169a4b] text-[16px] leading-none text-white">98%</div>
      <div class="h-[13px] w-[3px] border-r border-[#777] bg-white"></div>
      <svg class="ml-[8px] h-[18px] w-[11px]" viewBox="0 0 11 18" fill="#fff"><path d="M2 0h2v5h3V0h2v5h2v4c0 2-1.500 4-3.500 4v5h-4v-5C1.500 13 0 11 0 9V5h2z"/></svg>
      <svg class="ml-[111px] size-6" viewBox="0 0 24 24"><defs><linearGradient id="sun" x1="0" y1="0" x2="1" y2="1"><stop stop-color="#ffdf5a"/><stop offset="1" stop-color="#ff9410"/></linearGradient></defs><circle cx="12" cy="12" r="12" fill="url(#sun)"/></svg>
      <span class="ml-[13px] w-[45px] pt-[2px] text-[17.500px] tracking-[-0.200px]">79°F</span><span class="w-[50px] pt-[2px] text-[17.500px] tracking-[-0.200px]">Sunny</span>
      <svg class="ml-[19px] h-[10px] w-[17px]" viewBox="0 0 17 10"><path d="M.7 9.300L8.500 1.500l7.800 7.800" fill="none" stroke="#000" stroke-width="1.500"/></svg>
      <svg class="ml-[15px] h-[18px] w-[15px]" viewBox="0 0 15 18" fill="none" stroke="#000" stroke-width="1.300"><path d="M1 4h9v10H1zM10 8l4-2.500v7L10 10M3 1.500q3.500-1.500 7 0M3 16.500q3.500 1.500 7 0"/></svg>
      <svg class="ml-[11px] h-[20px] w-[21px]" viewBox="0 0 21 20"><path d="M4 13C1 13 .5 7 4 6.500 5 1 12 0 14 4.500c4 0 5 3 4.500 5.500L14 13z" fill="#888" stroke="#222" stroke-width="1.300"/><circle cx="15" cy="13.500" r="5.700" fill="#d9232e"/><path d="M13 11.500l4 4M17 11.500l-4 4" stroke="#fff" stroke-width="1.400"/></svg>
      <svg class="ml-[13px] size-4" viewBox="0 0 16 16" fill="none" stroke="#222" stroke-width="1.200"><path d="M8.500 15.500A7 7 0 0 1 15.500 8M5 15.500A10.500 10.500 0 0 1 15.500 4.500"/><path d="M1 15.500A14.500 14.500 0 0 1 15.500 1" stroke="#999"/><circle cx="13.500" cy="13.500" r="1.600" fill="#000"/></svg>
      <svg class="ml-[10px] h-4 w-[21px]" viewBox="0 0 21 16" fill="none" stroke="#000" stroke-width="1.200"><path d="M1 5.500h3l4-4v13l-4-4H1zM11 5.500q1.500 2.500 0 5"/><path d="M14 3q3 5 0 10M17 1q4.500 7 0 14" stroke="#999"/></svg>
      <div class="ml-[6px] w-[82px] text-center text-[14.500px] leading-[23px] tracking-[-0.300px] whitespace-nowrap">2:53 PM<br>11/29/2021</div>
      <svg class="ml-[15px] h-[31px] w-[31px]" viewBox="0 0 31 31"><path d="M0 1h20v17H9l-4 4v-4H0z"/><path d="M4 6h12M4 9.500h12M4 13h8" stroke="#fff" stroke-width="1.500"/><circle cx="20" cy="20.500" r="10" fill="#d2d2d1" fill-opacity=".92" stroke="#888"/><text x="20" y="25.500" font-family="Open Sans" font-size="14" text-anchor="middle">3</text></svg>
      <div class="ml-[14px] h-[50px] w-px bg-[#aaa]"></div>
    </div>
  </div>
</div>
<script>
  const correct = [1,2,3,4,6,7,9,12,13,16,17,21,22,24,25,27,32,34,35];
  const check = '<svg class="h-[11px] w-[13px]" viewBox="0 0 13 11"><path d="M1 5.500l3.800 3.700L12 1.500" fill="none" stroke="#fff" stroke-width="2.400"/></svg>';
  let cells = '';
  for (let n = 1; n <= 35; n++) {
    const ok = correct.includes(n);
    cells += `<a class="flex h-[50px] flex-col overflow-hidden rounded-[4px] border border-[#343a40] bg-white text-center text-[16px] leading-[26px]"><span class="h-6">${n}</span><span class="grid h-[24px] place-items-center ${ok ? 'bg-[#8bd800]' : 'bg-[#b93e3e]'}">${ok ? check : ''}</span></a>`;
  }
  document.getElementById('quiz').innerHTML = cells;
</script>
</body>
</html>
